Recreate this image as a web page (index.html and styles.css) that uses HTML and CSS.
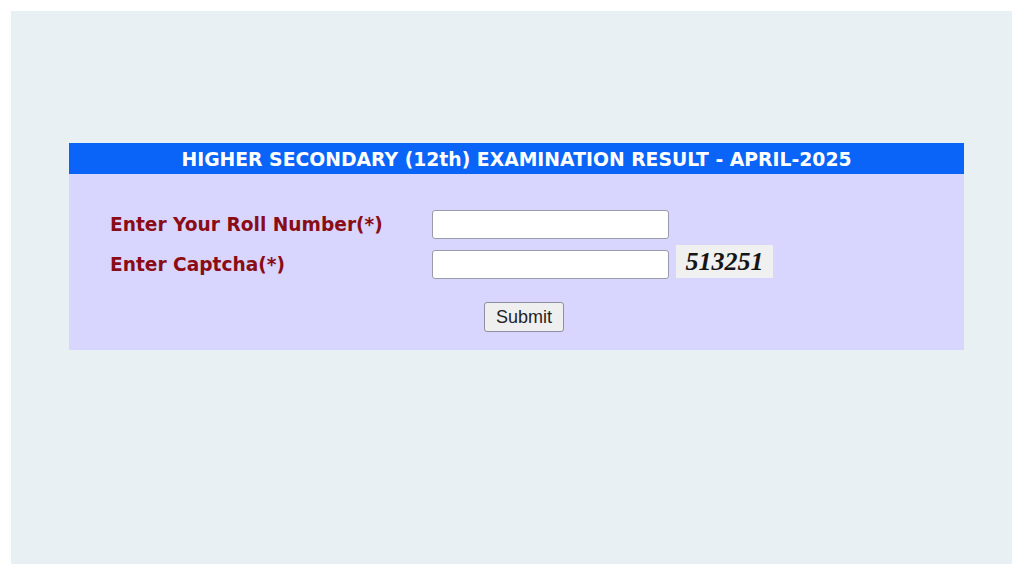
FILE: index.html
```html
<!DOCTYPE html>
<html>
<head>
<meta charset="utf-8">
<link rel="stylesheet" href="styles.css">
</head>
<body>
<div class="page">
  <div class="panel">
    <div class="title">HIGHER SECONDARY (12th) EXAMINATION RESULT - APRIL-2025</div>
    <div class="form">
      <div class="row">
        <label class="label">Enter Your Roll Number(*)</label>
        <input class="field" type="text">
      </div>
      <div class="row">
        <label class="label">Enter Captcha(*)</label>
        <input class="field" type="text">
        <div class="captcha">513251</div>
      </div>
      <div class="actions">
        <button class="submit" type="button">Submit</button>
      </div>
    </div>
  </div>
</div>
</body>
</html>
```
FILE: styles.css
```css
html, body {
  margin: 0;
  padding: 0;
  background: #ffffff;
}
.page {
  margin: 11px 12px 12px 11px;
  height: 421px;
  background: #e9f0f4;
  padding: 132px 0 0 58px;
}
.panel {
  width: 895px;
}
.title {
  height: 31px;
  background: #0a64f8;
  color: #ffffff;
  font-family: "DejaVu Sans", Verdana, sans-serif;
  font-weight: bold;
  font-size: 18.8px;
  line-height: 33px;
  text-align: center;
  white-space: nowrap;
}
.form {
  background: #d8d6fe;
  padding: 36px 0 18px 41px;
}
.row {
  display: flex;
  align-items: center;
  height: 29px;
  margin-bottom: 11px;
}
.label {
  width: 322px;
  color: #8a0c16;
  font-family: "DejaVu Sans", Verdana, sans-serif;
  font-weight: bold;
  font-size: 18.6px;
  white-space: nowrap;
}
.field {
  box-sizing: border-box;
  width: 237px;
  height: 29px;
  margin: 0;
  border: 1px solid #9a9aa8;
  border-radius: 3px;
  background: #ffffff;
}
.captcha {
  margin-left: 7px;
  width: 97px;
  height: 33px;
  margin-top: -6px;
  background: #f0f0f0;
  font-family: "Liberation Serif", "Times New Roman", serif;
  font-style: italic;
  font-weight: bold;
  font-size: 26px;
  line-height: 33px;
  text-align: center;
  color: #151515;
}
.actions {
  padding-top: 12px;
  padding-left: 374px;
}
.submit {
  box-sizing: border-box;
  width: 80px;
  height: 30px;
  font-family: "Liberation Sans", Arial, sans-serif;
  font-size: 18px;
  color: #222;
  background: #efefef;
  border: 1px solid #8f8f9d;
  border-radius: 3px;
  padding: 0;
}
```
